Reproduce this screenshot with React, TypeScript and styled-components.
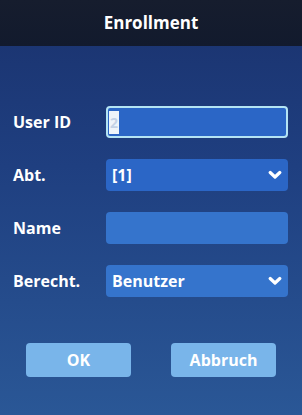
import React from "react";
import styled, { createGlobalStyle } from "styled-components";

const Global = createGlobalStyle`
  html, body { margin: 0; padding: 0; }
  body { width: 302px; height: 415px; overflow: hidden; font-family: "Open Sans", "Noto Sans", sans-serif; }
`;

const Screen = styled.div`
  width: 302px;
  height: 415px;
  display: flex;
  flex-direction: column;
  background: linear-gradient(180deg, #1a326e 0%, #1f3f80 40%, #2a5796 100%);
`;

const Header = styled.div`
  height: 46px;
  flex: 0 0 46px;
  background: linear-gradient(180deg, #161d2e 0%, #121a2d 100%);
  color: #ffffff;
  font-weight: 700;
  font-size: 17px;
  display: flex;
  align-items: center;
  justify-content: center;
  padding-bottom: 2px;
  box-sizing: border-box;
`;

const Form = styled.div`
  display: flex;
  flex-direction: column;
  gap: 21px;
  padding: 60px 14px 0 13px;
`;

const Row = styled.div`
  display: flex;
  align-items: center;
  height: 32px;
`;

const Label = styled.div`
  width: 93px;
  color: #ffffff;
  font-weight: 700;
  font-size: 16px;
`;

const Field = styled.div<{ $focused?: boolean; $light?: boolean }>`
  width: 182px;
  height: 32px;
  box-sizing: border-box;
  border-radius: 4px;
  background: ${(p) => (p.$light ? "#3574cc" : "#2b66c6")};
  border: ${(p) => (p.$focused ? "2px solid #b4e4f4" : "none")};
  display: flex;
  align-items: center;
  justify-content: space-between;
  padding: 0 ${(p) => (p.$focused ? "1px" : "6px")};
  color: #ffffff;
  font-weight: 700;
  font-size: 16px;
`;

const Caret = styled.div`
  width: 10px;
  height: 23px;
  background: #eef4fa;
  color: #c4d2e6;
  font-size: 14px;
  font-weight: 700;
  display: flex;
  align-items: center;
  justify-content: center;
`;

const Chevron = () => (
  <svg width="14" height="10" viewBox="0 0 14 10">
    <path d="M2.2 2.5 L7 7 L11.8 2.5" fill="none" stroke="#ffffff" strokeWidth="3.2" strokeLinecap="round" strokeLinejoin="round" />
  </svg>
);

const Buttons = styled.div`
  display: flex;
  gap: 40px;
  padding: 46px 0 0 26px;
`;

const Button = styled.div`
  width: 105px;
  height: 34px;
  border-radius: 4px;
  background: #79b5ea;
  color: #ffffff;
  font-weight: 700;
  font-size: 16px;
  display: flex;
  align-items: center;
  justify-content: center;
`;

export default function App() {
  return (
    <>
      <Global />
      <Screen>
        <Header>Enrollment</Header>
        <Form>
          <Row>
            <Label>User ID</Label>
            <Field $focused>
              <Caret>2</Caret>
            </Field>
          </Row>
          <Row>
            <Label>Abt.</Label>
            <Field>
              <span>[1]</span>
              <Chevron />
            </Field>
          </Row>
          <Row>
            <Label>Name</Label>
            <Field $light />
          </Row>
          <Row>
            <Label>Berecht.</Label>
            <Field $light>
              <span>Benutzer</span>
              <Chevron />
            </Field>
          </Row>
        </Form>
        <Buttons>
          <Button>OK</Button>
          <Button>Abbruch</Button>
        </Buttons>
      </Screen>
    </>
  );
}
